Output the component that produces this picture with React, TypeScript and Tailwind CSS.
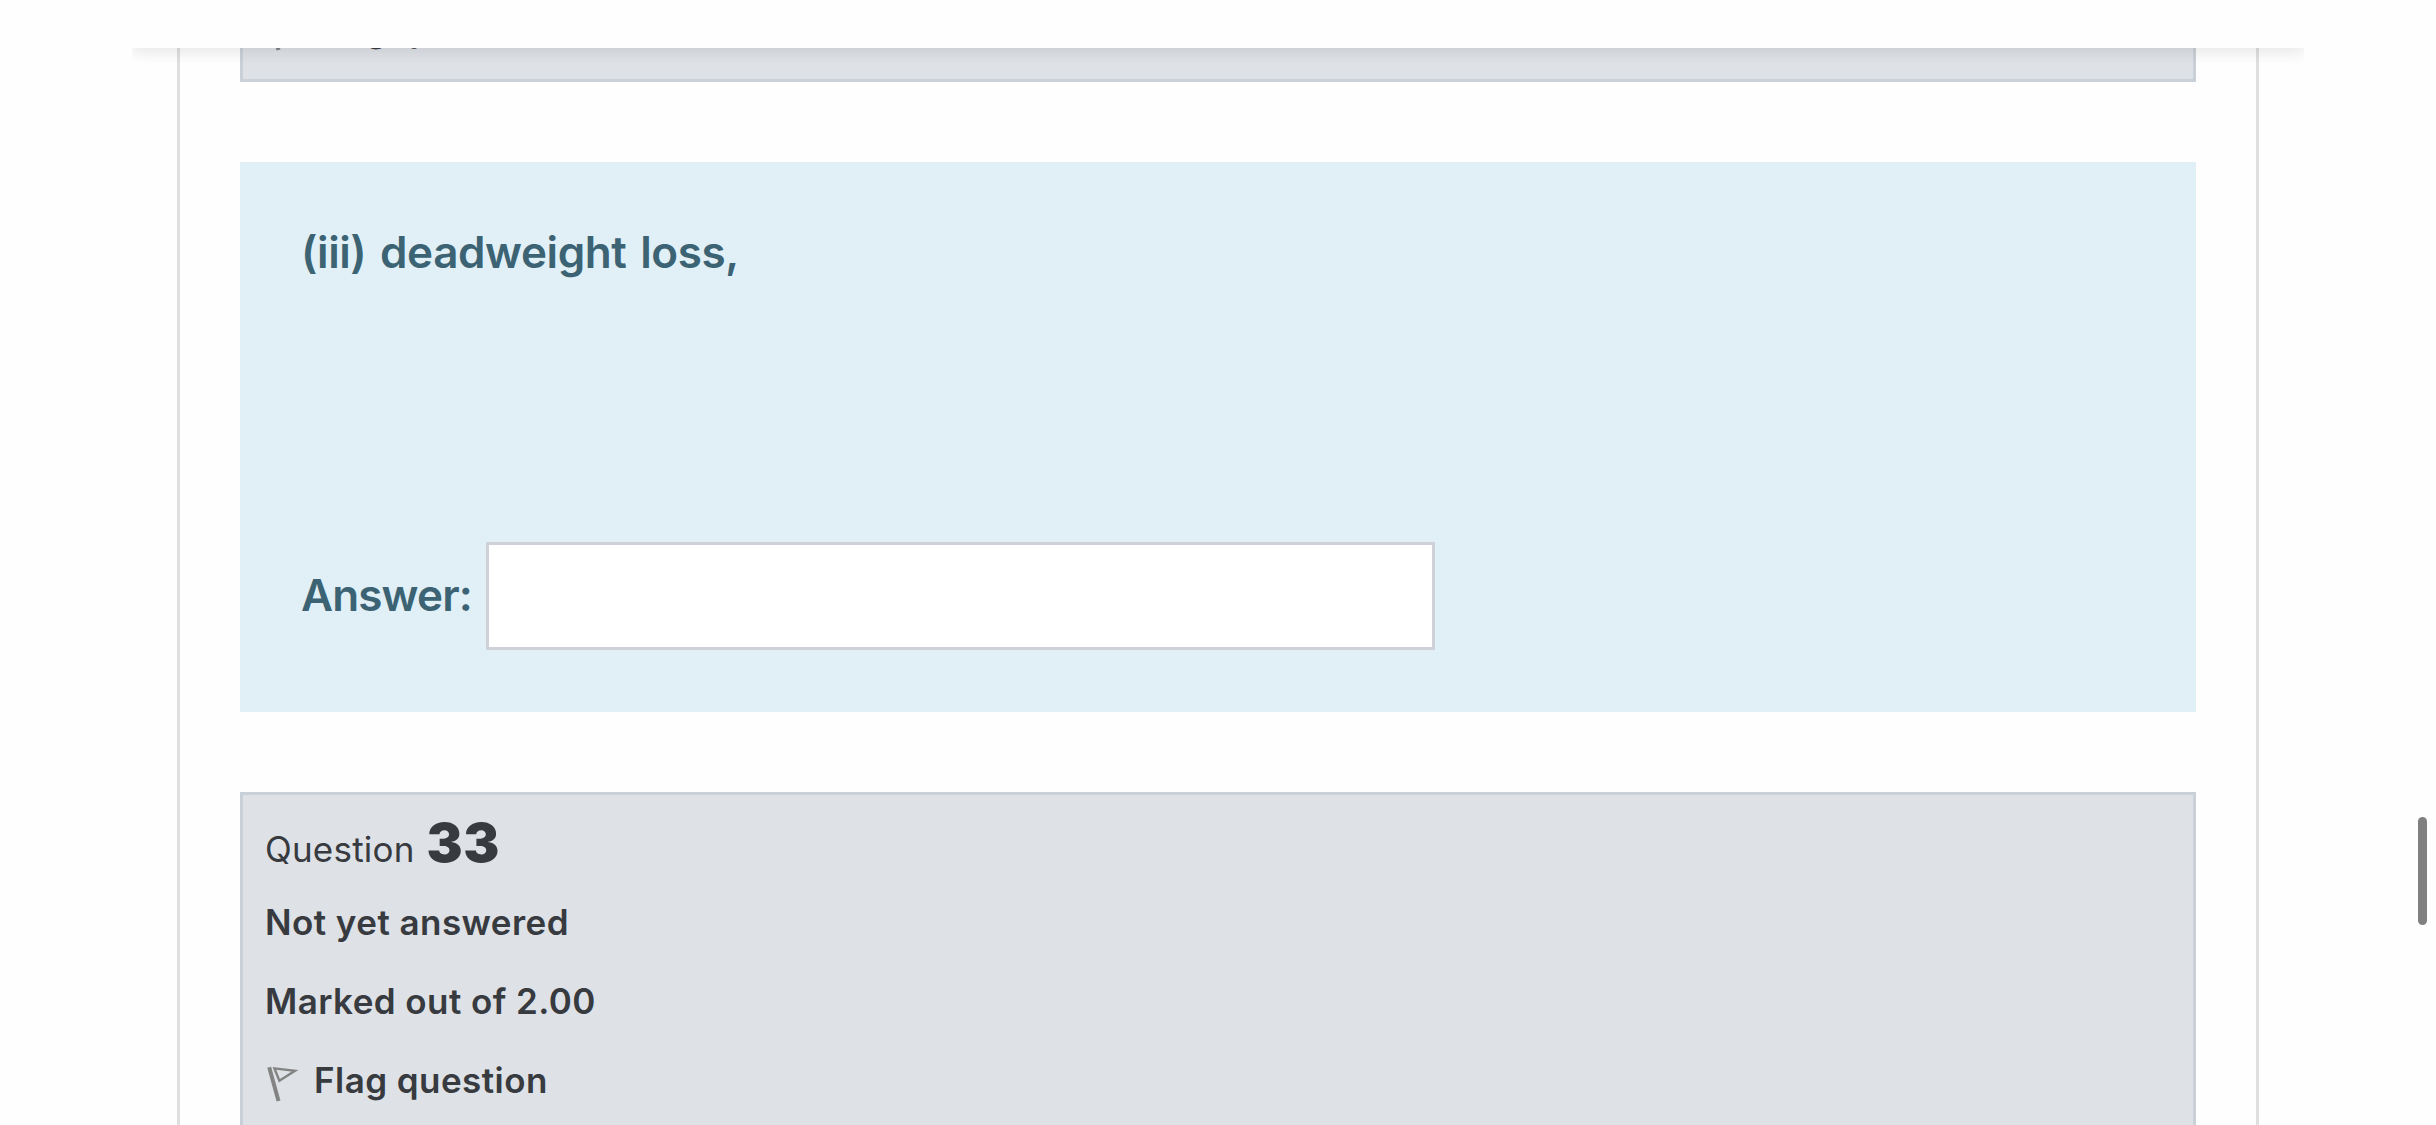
import React from "react";

function FlagRow() {
  return (
    <div className="flex h-[79px] items-center text-[35px] font-semibold leading-[79px] tracking-[0.45px]">
      <svg className="-ml-px h-[42px] w-[36px] shrink-0" viewBox="0 0 36 42" fill="none" stroke="#838383">
        <path d="M5.2 7.3 L14.5 41" strokeWidth="4" />
        <path d="M10.4 8.4 L31 10.8 L15.4 20.8 Z" strokeWidth="2.4" />
      </svg>
      <span className="ml-[14px]">Flag question</span>
    </div>
  );
}

export default function App() {
  return (
    <div className="relative h-[1125px] w-full overflow-hidden bg-[#fefefe] font-['Inter',sans-serif] text-[#373a3e]">
      <main className="ml-[177px] h-full w-[2082px] border-x-[3px] border-[#dfdfdf] px-[60px]">
        <section className="h-[82px] border-[3px] border-t-0 border-[#cad0d7] bg-[#dee1e6] pl-[22px]">
          <div className="-translate-y-[10px]">
            <FlagRow />
          </div>
        </section>

        <section className="mt-[80px] flex h-[550px] flex-col justify-between bg-[#e1f0f7] px-[61px] pt-[56px] pb-[62px] text-[44px] font-semibold text-[#3c6373]">
          <p className="leading-[68px] tracking-[-0.4px] [word-spacing:3px]">(iii) deadweight loss,</p>
          <label className="flex items-center">
            <span className="-mt-[3px] w-[185px] whitespace-nowrap leading-[66px] tracking-[-0.85px]">Answer:</span>
            <input type="text" className="h-[108px] w-[949px] border-[3px] border-[#cfd1d9] bg-white outline-none" />
          </label>
        </section>

        <section className="mt-[80px] h-[360px] border-[3px] border-[#cad0d7] bg-[#dee1e6] pl-[22px] text-[35px]">
          <h3 className="flex h-[88px] items-baseline pt-[18px] leading-[60px]">
            <span className="tracking-[0.2px]">Question</span>
            <span className="ml-[12px] text-[54px] font-black tracking-[0.5px]">33</span>
          </h3>
          <div className="font-semibold leading-[79px] tracking-[0.45px]">Not yet answered</div>
          <div className="font-semibold leading-[79px] tracking-[0.43px]">Marked out of 2.00</div>
          <FlagRow />
        </section>
      </main>

      <div className="absolute left-[132px] top-0 h-[80px] w-[2172px] overflow-hidden">
        <header className="h-[48px] bg-[#fefefe] shadow-[0_6px_12px_rgba(0,0,0,0.08)]" />
      </div>
      <div className="absolute left-[2418px] top-[817px] h-[108px] w-[9px] rounded-full bg-[#808080]" />
    </div>
  );
}
